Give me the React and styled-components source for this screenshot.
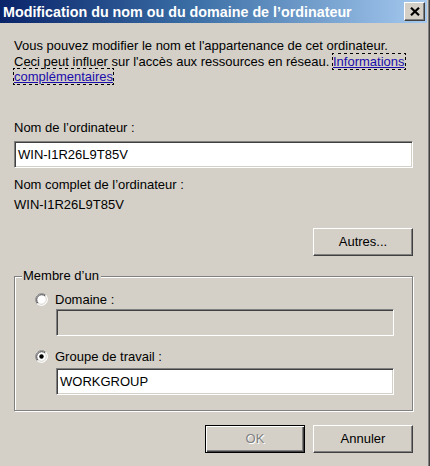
import React from "react";
import styled, { createGlobalStyle, css } from "styled-components";

const Global = createGlobalStyle`
  html, body { margin: 0; padding: 0; background: #d4d0c8; }
  body { font-family: "Liberation Sans", Arial, sans-serif; font-size: 13px; color: #000; }
`;

const Window = styled.div`
  width: 430px;
  height: 466px;
  box-sizing: border-box;
  background: #d4d0c8;
  border-right: 1px solid #404040;
  box-shadow: inset -1px 0 0 #808080;
  display: flex;
  flex-direction: column;
  overflow: hidden;
`;

const TitleBar = styled.div`
  height: 23px;
  margin-right: 2px;
  flex: none;
  display: flex;
  align-items: center;
  justify-content: space-between;
  padding: 0 2px 0 3px;
  background: linear-gradient(to right, #0a246a 0%, #3a6ea5 45%, #a6caf0 100%);
`;

const Title = styled.div`
  color: #fff;
  font-family: "Liberation Sans", Arial, sans-serif;
  font-weight: bold;
  font-size: 14.3px;
  white-space: nowrap;
`;

const raised = css`
  background: #d4d0c8;
  border: 1px solid;
  border-color: #fff #404040 #404040 #fff;
  box-shadow: inset -1px -1px 0 #808080;
`;

const CloseButton = styled.div`
  ${raised};
  box-sizing: border-box;
  width: 21px;
  height: 19px;
  display: flex;
  align-items: center;
  justify-content: center;
`;

const Body = styled.div`
  flex: 1;
  display: flex;
  flex-direction: column;
  padding: 15px 16px 0 14px;
`;

const Intro = styled.p`
  margin: 0;
  line-height: 15.5px;
  white-space: nowrap;
`;

const Link = styled.span`
  color: #1a0dab;
  text-decoration: underline;
  outline: 1px dotted #000;
`;

const Label = styled.div`
  line-height: 16px;
  height: 16px;
  margin-top: ${(p) => p.$mt || 0}px;
  white-space: nowrap;
`;

const TextBox = styled.div`
  box-sizing: border-box;
  height: 27px;
  margin-top: ${(p) => p.$mt || 0}px;
  margin-left: ${(p) => p.$ml || 0}px;
  background: ${(p) => (p.$disabled ? "#d4d0c8" : "#fff")};
  border: 1px solid;
  border-color: #808080 #fff #fff #808080;
  box-shadow: inset 1px 1px 0 #404040, inset -1px -1px 0 #d4d0c8;
  display: flex;
  align-items: center;
  padding-left: 3px;
  white-space: nowrap;
`;

const ButtonRow = styled.div`
  display: flex;
  justify-content: flex-end;
  gap: 8px;
  margin-top: ${(p) => p.$mt || 0}px;
`;

const Button = styled.div`
  ${raised};
  box-sizing: border-box;
  width: 100px;
  height: 28px;
  display: flex;
  align-items: center;
  justify-content: center;
  ${(p) =>
    p.$default &&
    css`
      border: 1px solid #000;
      box-shadow: inset 1px 1px 0 #fff, inset -1px -1px 0 #404040,
        inset -2px -2px 0 #808080;
    `}
  ${(p) =>
    p.$disabled &&
    css`
      color: #808080;
      text-shadow: 1px 1px 0 #fff;
    `}
`;

const GroupBox = styled.div`
  position: relative;
  margin-top: 20px;
  height: 135px;
  box-sizing: border-box;
  border: 1px solid #808080;
  box-shadow: inset 1px 1px 0 #fff, 1px 1px 0 #fff;
  padding: 15px 18px 0 20px;
  display: flex;
  flex-direction: column;
`;

const Legend = styled.span`
  position: absolute;
  top: -9px;
  left: 7px;
  padding: 0 2px 0 1px;
  background: #d4d0c8;
  line-height: 16px;
`;

const RadioRow = styled.label`
  display: flex;
  align-items: center;
  gap: 7px;
  height: 16px;
  margin-top: ${(p) => p.$mt || 0}px;
`;

function Radio({ checked }) {
  return (
    <svg width="13" height="13" viewBox="0 0 13 13">
      <circle cx="6.5" cy="6.5" r="6" fill="#fff" />
      <path d="M2.26 10.74 A6 6 0 0 1 10.74 2.26" stroke="#808080" strokeWidth="1" fill="none" />
      <path d="M10.74 2.26 A6 6 0 0 1 2.26 10.74" stroke="#fff" strokeWidth="1" fill="none" />
      <path d="M2.97 10.03 A5 5 0 0 1 10.03 2.97" stroke="#404040" strokeWidth="1" fill="none" />
      <path d="M10.03 2.97 A5 5 0 0 1 2.97 10.03" stroke="#d4d0c8" strokeWidth="1" fill="none" />
      {checked && <circle cx="6.5" cy="6.5" r="2.2" fill="#000" />}
    </svg>
  );
}

export default function App() {
  return (
    <>
      <Global />
      <Window>
        <TitleBar>
          <Title>Modification du nom ou du domaine de l’ordinateur</Title>
          <CloseButton>
            <svg width="10" height="9" viewBox="0 0 10 9">
              <path d="M1 0.8 L9 8.2 M9 0.8 L1 8.2" stroke="#000" strokeWidth="2.2" />
            </svg>
          </CloseButton>
        </TitleBar>
        <Body>
          <Intro>
            Vous pouvez modifier le nom et l'appartenance de cet ordinateur.
            <br />
            Ceci peut influer sur l'accès aux ressources en réseau.{" "}
            <Link>
              Informations
              <br />
              complémentaires
            </Link>
          </Intro>
          <Label $mt={35}>Nom de l’ordinateur :</Label>
          <TextBox $mt={5}>WIN-I1R26L9T85V</TextBox>
          <Label $mt={9}>Nom complet de l’ordinateur :</Label>
          <Label $mt={4}>WIN-I1R26L9T85V</Label>
          <ButtonRow $mt={15}>
            <Button>Autres...</Button>
          </ButtonRow>
          <GroupBox>
            <Legend>Membre d’un</Legend>
            <RadioRow>
              <Radio />
              Domaine :
            </RadioRow>
            <TextBox $mt={1} $ml={21} $disabled />
            <RadioRow $mt={13}>
              <Radio checked />
              Groupe de travail :
            </RadioRow>
            <TextBox $mt={3} $ml={21}>WORKGROUP</TextBox>
          </GroupBox>
          <ButtonRow $mt={14}>
            <Button $default $disabled>
              OK
            </Button>
            <Button>Annuler</Button>
          </ButtonRow>
        </Body>
      </Window>
    </>
  );
}
